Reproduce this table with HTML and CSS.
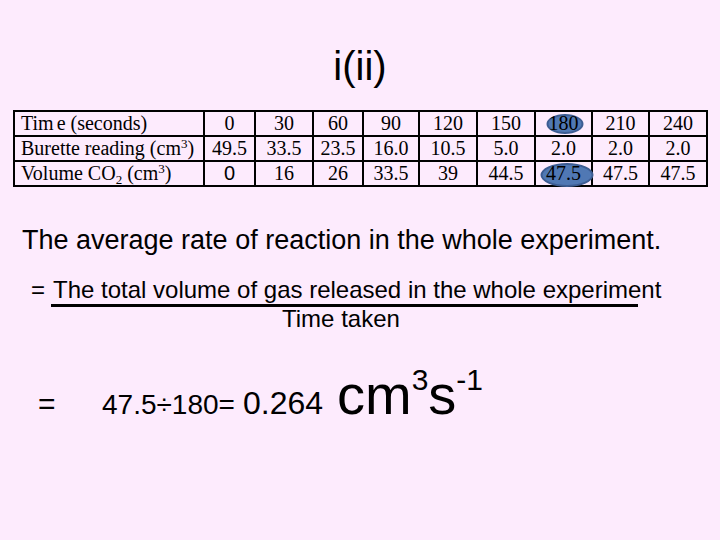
FILE: index.html
```html
<!DOCTYPE html>
<html lang="en">
<head>
    <meta charset="UTF-8">
    <meta name="viewport" content="width=device-width, initial-scale=1.0">
    <title>i(ii)</title>
    <link rel="stylesheet" href="styles.css">
</head>
<body>

    <div class="slide">
        <h1 class="title">i(ii)</h1>

        <table class="data">
            <colgroup>
                <col style="width: 190px">
                <col style="width: 51px">
                <col style="width: 58px">
                <col style="width: 50px">
                <col style="width: 56px">
                <col style="width: 58px">
                <col style="width: 58px">
                <col style="width: 57px">
                <col style="width: 57px">
                <col style="width: 58px">
            </colgroup>
            <tr>
                <td class="label">Tim<span class="gap">e</span> (seconds)</td>
                <td>0</td><td>30</td><td>60</td><td>90</td><td>120</td><td>150</td>
                <td><span class="mark mark-small">180</span></td>
                <td>210</td><td>240</td>
            </tr>
            <tr>
                <td class="label">Burette reading (cm<sup>3</sup>)</td>
                <td>49.5</td><td>33.5</td><td>23.5</td><td>16.0</td><td>10.5</td><td>5.0</td>
                <td>2.0</td><td>2.0</td><td>2.0</td>
            </tr>
            <tr>
                <td class="label">Volume CO<sub>2</sub> (cm<sup>3</sup>)</td>
                <td class="sans">0</td><td>16</td><td>26</td><td>33.5</td><td>39</td><td>44.5</td>
                <td><span class="mark mark-big">47.5</span></td>
                <td>47.5</td><td>47.5</td>
            </tr>
        </table>

        <p class="statement">The average rate of reaction in the whole experiment.</p>

        <div class="formula">
            <span class="eq">=</span>
            <div class="fraction">
                <span class="numerator">The total volume of gas released in the whole experiment</span>
                <span class="bar"></span>
                <span class="denominator">Time taken</span>
            </div>
        </div>

        <div class="answer">
            <span class="answer-eq">=</span>
            <span class="calc">47.5÷180=</span>
            <span class="result">0.264</span>
            <span class="unit">cm<sup>3</sup>s<sup>-1</sup></span>
        </div>
    </div>

</body>
</html>
```

FILE: styles.css
```css
body { margin: 0; background: #fdebfd; color: #000; font-family: "Liberation Sans", Arial, sans-serif; }
.slide { width: 720px; height: 540px; overflow: hidden; display: flex; flex-direction: column; }

.title { margin: 0; padding-top: 42px; font-size: 40px; font-weight: normal; line-height: 48px; text-align: center; }

.data { margin: 20px 0 0 13px; width: 693px; border-collapse: collapse; table-layout: fixed; font-family: "Liberation Serif", "Times New Roman", serif; font-size: 20px; }
.data td { border: 2px solid #000; height: 23px; padding: 0; line-height: 23px; text-align: center; white-space: nowrap; }
.data td.label { text-align: left; padding-left: 6px; }
.data .gap { margin-left: 3px; }
.data sup { font-size: 13px; vertical-align: 7px; line-height: 0; }
.data sub { font-size: 13px; vertical-align: -4px; line-height: 0; }
.data td.sans { font-family: "Liberation Sans", Arial, sans-serif; }

.mark { position: relative; z-index: 0; display: inline-block; }
.mark::before { content: ""; position: absolute; z-index: -1; left: 50%; top: 50%; background: #5078b4; border: 2px solid #3c5c92; border-radius: 50%; transform: translate(-50%, -50%); }
.mark-small::before { width: 33px; height: 16px; margin-left: 1px; }
.mark-big::before { width: 49px; height: 20px; margin-left: 3px; margin-top: 1px; }

.statement { margin: 38px 0 0 22px; font-size: 27px; line-height: 30px; }

.formula { display: flex; align-items: flex-start; margin: 22px 0 0 31px; font-size: 24px; line-height: 26px; }
.eq { margin-right: 6px; }
.fraction { display: flex; flex-direction: column; align-items: flex-start; }
.numerator { margin-left: 2px; }
.bar { width: 587px; height: 3px; background: #000; margin-top: 1px; }
.denominator { margin: -1px 0 0 231px; }

.answer { display: flex; align-items: baseline; margin: 33px 0 0 38px; line-height: 60px; }
.answer-eq { font-size: 30px; width: 64px; }
.calc { font-size: 28px; }
.result { font-size: 32px; margin-left: 8px; }
.unit { font-size: 56px; margin-left: 14px; }
.unit sup { font-size: 30px; vertical-align: 24px; line-height: 0; }
```
